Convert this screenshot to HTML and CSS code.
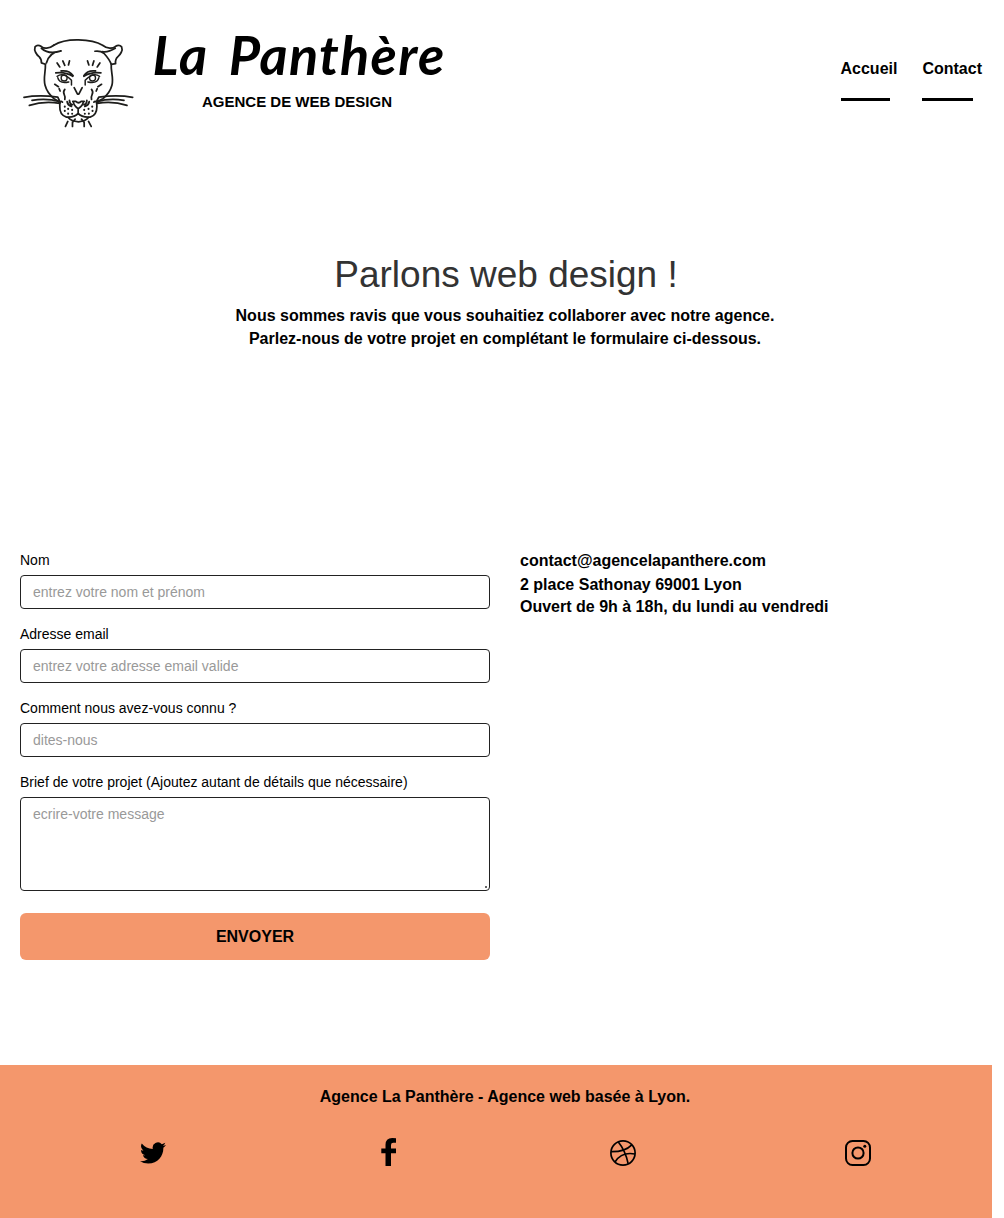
FILE: index.html
```html
<!DOCTYPE html>
<html lang="fr">
<head>
<meta charset="utf-8">
<title>La Panthère - Contact</title>
<link rel="stylesheet" href="styles.css">
</head>
<body>
<header class="header">
  <a class="brand" href="#">
    <svg class="panther" viewBox="30 50 350 280" fill="none" stroke="#1d1d1b" stroke-width="5.2" stroke-linecap="round" stroke-linejoin="round">
      <path d="M131 77Q158 60 205 61T277 77C291 88 307 88 315 81Q327 73 334 82C339 93 329 106 323 111Q314 119 316 132L303 134Q298 120 281 101Q271 93 254 95"/>
      <path d="M131 77C117 88 101 88 94 81Q82 73 75 82C71 93 80 106 87 111Q95 119 94 130L106 134"/>
      <path d="M94 86Q116 106 153 94Q119 97 109 130M315 86Q293 99 277 96"/>
      <path d="M106 134C107 158 99 174 105 197Q111 220 132 237L146 245M303 134C301 158 311 174 305 197Q299 220 278 237L263 245"/>
      <path d="M141 130L149 142M158 124L164 137M178 124L175 136M232 124L236 136M251 124L247 137M269 130L261 142"/>
      <path d="M137 160Q165 156 188 170M153 154Q177 151 189 168M272 160Q243 156 221 170M256 154Q232 151 221 168"/>
      <path d="M141 170Q160 157 184 182V196M143 174Q147 193 176 187M268 170Q249 157 225 182V196M266 174Q262 193 233 187" stroke-width="4.5"/>
      <g stroke-width="4"><circle cx="162" cy="175" r="9"/><circle cx="247" cy="175" r="9"/></g>
      <path d="M192 204L202 223H206L216 204M134 194L145 201M147 207L150 214M164 209C153 222 169 225 164 239M274 194L263 201M261 207L258 214M244 209C255 222 239 225 244 239"/>
      <path d="M188 245H197Q205 253 213 245H222M189 245Q191 258 204 267Q218 258 220 245M204 267V281Q193 294 169 292Q148 286 149 260Q148 239 157 247M204 281Q215 294 240 292Q260 286 260 260Q260 239 251 247"/>
      <path d="M171 246Q173 257 184 260M178 242Q178 252 187 255M237 246Q235 257 224 260M230 242Q230 252 221 255M174 293Q183 304 205 306Q226 304 235 293"/>
      <path d="M42 233Q85 225 143 232L148 243M66 242Q111 235 149 246M58 257Q102 243 149 251M367 233Q324 225 266 232L260 243M341 242Q297 235 261 246M350 257Q307 243 261 251"/>
      <path d="M173 305L166 320M187 307V320M195 298L187 308M222 307V320M214 298L222 308M235 305L243 320"/>
      <path d="M164 260V261M174 267V268M186 270V271M164 273V274M174 281V282M186 282V282M222 270V271M235 267V268M246 260V261M224 282V282M236 281V282M247 273V274" stroke-width="6"/>
    </svg>
    <span class="wordmark">
      <span class="name">La Panthère</span>
      <span class="tagline">AGENCE DE WEB DESIGN</span>
    </span>
  </a>
  <nav class="nav">
    <a class="home" href="#">Accueil</a>
    <a class="contact-link" href="#">Contact</a>
  </nav>
</header>
<section class="intro">
  <h1>Parlons web design !</h1>
  <p class="lead">Nous sommes ravis que vous souhaitiez collaborer avec notre agence.</p>
  <p class="lead second">Parlez-nous de votre projet en complétant le formulaire ci-dessous.</p>
</section>
<main class="content">
  <form class="form">
    <label for="nom">Nom</label>
    <input id="nom" type="text" placeholder="entrez votre nom et prénom">
    <label for="email">Adresse email</label>
    <input id="email" type="email" placeholder="entrez votre adresse email valide">
    <label for="source">Comment nous avez-vous connu ?</label>
    <input id="source" type="text" placeholder="dites-nous">
    <label for="brief">Brief de votre projet (Ajoutez autant de détails que nécessaire)</label>
    <textarea id="brief" placeholder="ecrire-votre message"></textarea>
    <button type="button">ENVOYER</button>
  </form>
  <address class="details">
    <p class="mail">contact@agencelapanthere.com</p>
    <p class="place">2 place Sathonay 69001 Lyon</p>
    <p class="hours">Ouvert de 9h à 18h, du lundi au vendredi</p>
  </address>
</main>
<footer class="footer">
  <p class="credit">Agence La Panthère - Agence web basée à Lyon.</p>
  <div class="social">
    <a href="#" aria-label="Twitter"><svg class="icon" viewBox="0 0 24 24"><path d="M23.95 4.57a10 10 0 0 1-2.82.77 4.96 4.96 0 0 0 2.16-2.72 9.99 9.99 0 0 1-3.12 1.19 4.92 4.92 0 0 0-8.38 4.48A13.93 13.93 0 0 1 1.64 3.16a4.92 4.92 0 0 0 1.52 6.57 4.9 4.9 0 0 1-2.23-.61v.06a4.92 4.92 0 0 0 3.95 4.83 5 5 0 0 1-2.21.08 4.94 4.94 0 0 0 4.6 3.42A9.87 9.87 0 0 1 0 19.54a14 14 0 0 0 7.55 2.21c9.05 0 14-7.5 14-13.98 0-.21 0-.42-.02-.63a9.94 9.94 0 0 0 2.46-2.55z"/></svg></a>
    <a href="#" aria-label="Facebook"><svg class="icon facebook" viewBox="0 0 15 28"><path d="M15 .2V4.8H12.3Q10 4.8 10 7V10.5H15V15.2H10V28H4.5V15.2H.3V10.5H4.5V6.8Q4.5 0 11.2 0Q13.6 0 15 .2Z"/></svg></a>
    <a href="#" aria-label="Dribbble"><svg class="icon" viewBox="0 0 26 26" fill="none" stroke="#000" stroke-width="1.7"><circle cx="13" cy="13" r="12.1"/><path d="M8.3 2Q15.5 10.7 18.2 23.8M1 11.7Q14.8 12 21.8 4.8M5 22Q11.5 11.5 25 14"/></svg></a>
    <a href="#" aria-label="Instagram"><svg class="icon" viewBox="0 0 26 26" fill="none" stroke="#000" stroke-width="2"><rect x="1" y="1" width="24" height="24" rx="6.5"/><circle cx="13" cy="13" r="5.6"/><circle cx="19.8" cy="6.3" r="1.5" fill="#000" stroke="none"/></svg></a>
  </div>
</footer>
</body>
</html>
```

FILE: styles.css
```css
* { box-sizing: border-box; }
html { background: #fff; }
body { margin: 0; width: 992px; height: 1218px; font: 14px/20px "Liberation Sans", Arial, sans-serif; color: #000; display: flex; flex-direction: column; }
p, h1 { margin: 0; }
a { color: inherit; text-decoration: none; }
.header { height: 254px; padding-left: 20px; display: flex; justify-content: space-between; align-items: flex-start; }
.brand { display: flex; padding-top: 25px; }
.panther { width: 117px; height: 104px; margin-top: 6px; }
.wordmark { width: 320px; display: flex; flex-direction: column; align-items: center; }
.name { margin-left: 4px; font: italic 700 54px/60px Lato, sans-serif; letter-spacing: 1.3px; word-spacing: 7px; white-space: nowrap; }
.tagline { font-size: 15px; font-weight: bold; line-height: 22px; margin-top: 6px; }
.nav { display: flex; gap: 25px; padding: 59px 10px 0 0; font-size: 16px; font-weight: bold; line-height: 20px; }
.nav a::after { content: ""; display: block; height: 3px; margin-top: 19px; background: #000; }
.home::after { width: 49px; }
.contact-link::after { width: 51px; }
.intro { width: 1010px; height: 296px; text-align: center; }
h1 { padding-left: 2px; font-size: 37px; font-weight: normal; line-height: 42px; color: #333; }
.lead { font-size: 16px; font-weight: bold; line-height: 23px; margin-top: 8px; }
.second { margin-top: 0; }
.content { height: 514.5px; padding-left: 20px; display: flex; gap: 30px; }
.form { width: 470px; display: flex; flex-direction: column; }
label { line-height: 20px; margin-bottom: 5px; }
input, textarea { width: 100%; height: 34px; padding: 6px 12px; margin: 0 0 15px; border: 1px solid #222; border-radius: 4px; background: #fff; font: inherit; }
textarea { height: 94px; margin-bottom: 22px; }
textarea::-webkit-resizer { background: linear-gradient(#666, #666) 11px 11px / 2px 2px no-repeat; }
::placeholder { color: #999; opacity: 1; }
button { height: 47px; border: 0; border-radius: 6px; background: #f4976c; color: #000; font: bold 16px/24px "Liberation Sans", Arial, sans-serif; }
.details { margin-top: -1px; font-size: 16px; font-style: normal; font-weight: bold; line-height: 23px; }
.mail { margin-bottom: 1px; }
.hours { margin-top: -1px; }
.footer { flex: 1; background: #f4976c; }
.credit { width: 1010px; padding-top: 20px; font-size: 16px; font-weight: bold; line-height: 24px; text-align: center; }
.social { width: 940px; margin: 31px 0 0 35px; display: grid; grid-template-columns: repeat(4, 1fr); justify-items: center; align-items: center; }
.social a { display: flex; }
.icon { width: 26px; height: 26px; }
.facebook { width: 15px; height: 28px; margin-top: -2px; margin-left: 1px; }
```
